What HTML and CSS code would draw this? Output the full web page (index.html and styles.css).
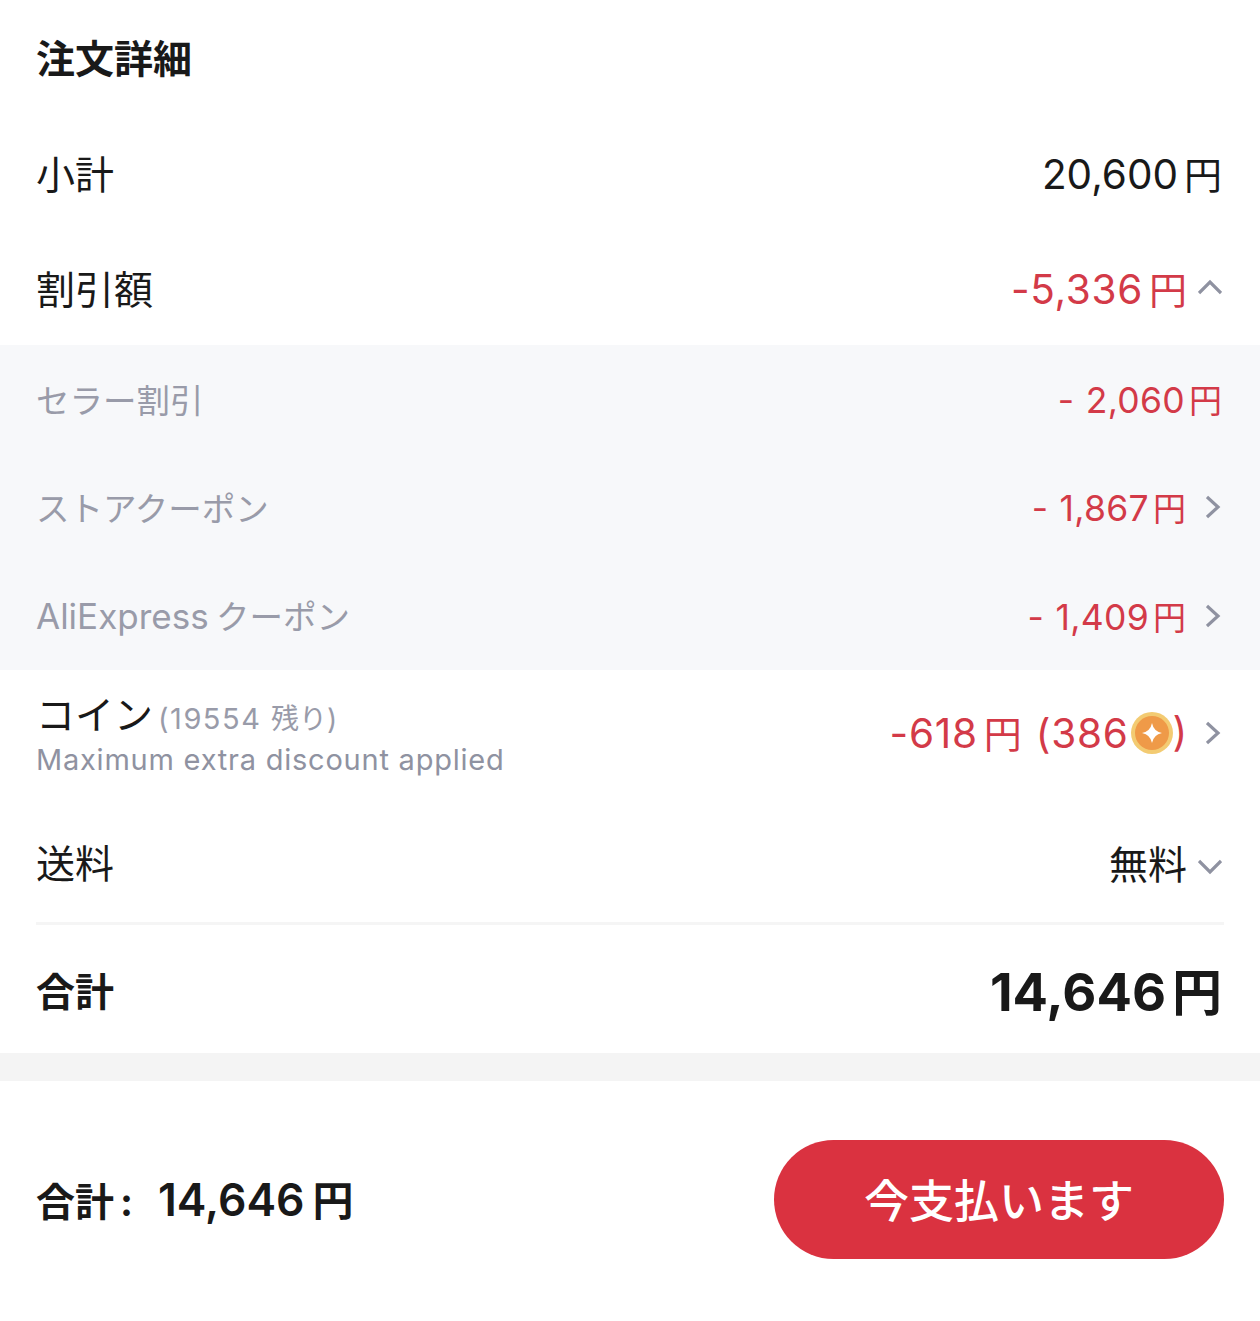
FILE: index.html
```html
<!DOCTYPE html>
<html lang="ja">
<head>
  <meta charset="UTF-8">
  <title>注文詳細</title>
  <link rel="stylesheet" href="styles.css">
</head>
<body>
  <div class="details">
    <h2 class="title">注文詳細</h2>

    <div class="row row-subtotal">
      <span class="label">小計</span>
      <span class="value"><span>20,600<span class="yen">円</span></span></span>
    </div>

    <div class="row row-discount">
      <span class="label">割引額</span>
      <span class="value red"><span>-5,336<span class="yen">円</span></span>
        <svg class="chevron" viewBox="0 0 24 24"><path d="M1 17 12 6l11 11"/></svg>
      </span>
    </div>

    <div class="panel">
      <div class="panel-row">
        <span class="panel-label">セラー割引</span>
        <span class="panel-value"><span>- 2,060<span class="yen">円</span></span></span>
      </div>
      <div class="panel-row">
        <span class="panel-label">ストアクーポン</span>
        <span class="panel-value"><span>- 1,867<span class="yen">円</span></span>
          <svg class="arrow" viewBox="0 0 16 24"><path d="M1 2l11 10L1 22"/></svg>
        </span>
      </div>
      <div class="panel-row">
        <span class="panel-label"><span class="latin">AliExpress</span> クーポン</span>
        <span class="panel-value"><span>- 1,409<span class="yen">円</span></span>
          <svg class="arrow" viewBox="0 0 16 24"><path d="M1 2l11 10L1 22"/></svg>
        </span>
      </div>
    </div>

    <div class="row row-coin">
      <div class="coin-text">
        <div class="coin-title">コイン<span class="coin-left">(19554 <span class="coin-left-unit">残り)</span></span></div>
        <div class="coin-note">Maximum extra discount applied</div>
      </div>
      <span class="value red"><span class="coin-amount">-618<span class="yen">円</span> (386</span><svg class="coin" viewBox="0 0 42 42">
          <circle cx="21" cy="21" r="21" fill="#f3cb72"/>
          <circle cx="21" cy="21" r="17" fill="#ef9a48"/>
          <path d="M21 11q1.600 8.400 10 10q-8.400 1.600-10 10q-1.600-8.400-10-10q8.400-1.600 10-10z" fill="#fff"/>
        </svg><span class="coin-amount">)</span>
        <svg class="arrow arrow-coin" viewBox="0 0 16 24"><path d="M1 2l11 10L1 22"/></svg>
      </span>
    </div>

    <div class="row row-shipping">
      <span class="label">送料</span>
      <span class="value"><span class="free">無料</span>
        <svg class="chevron chevron-down" viewBox="0 0 24 24"><path d="M1 7l11 11L23 7"/></svg>
      </span>
    </div>

    <div class="row row-total">
      <span class="total-label">合計</span>
      <span class="total-value">14,646<span class="yen">円</span></span>
    </div>
  </div>

  <div class="band"></div>

  <div class="footer">
    <div class="footer-total">合計<span class="colon">:</span><span class="footer-amount">14,646<span class="yen">円</span></span></div>
    <button class="pay">今支払います</button>
  </div>
</body>
</html>
```

FILE: styles.css
```css
body {
  margin: 0;
  background-color: #ffffff;
  color: #191919;
  font-family: 'Inter', 'Noto Sans CJK JP', sans-serif;
}
.details {
  height: 1053px;
}
.title {
  margin: 0;
  padding: 0 36px;
  height: 115px;
  line-height: 118px;
  font-size: 39px;
  font-weight: 700;
}
.row {
  display: flex;
  justify-content: space-between;
  align-items: center;
  padding: 0 36px;
}
.row-subtotal {
  height: 115px;
}
.row-discount {
  height: 115px;
}
.label {
  font-size: 39px;
  font-weight: 400;
  padding-bottom: 2px;
}
.value {
  display: flex;
  align-items: center;
  font-size: 40.500px;
  padding-right: 2px;
  white-space: nowrap;
}
.red {
  color: #d33a48;
  letter-spacing: 0.700px;
}
.yen {
  margin-left: 6px;
  font-size: 38px;
  letter-spacing: 0;
}
.free {
  font-size: 39px;
}
.chevron {
  width: 24px;
  height: 24px;
  margin-left: 11px;
  fill: none;
  stroke: #8f92a1;
  stroke-width: 3.2;
}
.chevron-down {
  margin-top: 7px;
}
.arrow {
  width: 16px;
  height: 24px;
  margin-left: 20px;
  fill: none;
  stroke: #8f92a1;
  stroke-width: 3.2;
}
.arrow-coin {
  margin-left: 18px;
}
.panel {
  background-color: #f7f8fa;
  height: 325px;
  display: grid;
  grid-template-rows: repeat(3, 1fr);
}
.panel-row {
  display: flex;
  justify-content: space-between;
  align-items: center;
  padding: 0 36px;
}
.panel-label {
  font-size: 33.500px;
  color: #999ba9;
  padding-bottom: 2px;
  word-spacing: -2px;
}
.latin {
  font-size: 35px;
}
.panel-value {
  display: flex;
  align-items: center;
  font-size: 35.500px;
  color: #d33a48;
  letter-spacing: 0.300px;
  word-spacing: 1px;
  padding-right: 2px;
  white-space: nowrap;
}
.panel-value .yen {
  font-size: 33px;
  margin-left: 4px;
}
.row-coin {
  height: 132px;
  padding-bottom: 7px;
  box-sizing: border-box;
}
.coin-title {
  font-size: 39px;
  line-height: 50px;
}
.coin-left {
  font-size: 29px;
  letter-spacing: 1.500px;
  margin-left: 5px;
  color: #999ba9;
}
.coin-left-unit {
  font-size: 28px;
  letter-spacing: 0;
}
.coin-note {
  font-size: 29px;
  line-height: 32px;
  color: #8f92a1;
  letter-spacing: 0.770px;
}
.coin-amount {
  padding-bottom: 2px;
  word-spacing: 2px;
}
.coin {
  width: 42px;
  height: 42px;
  margin-left: 2px;
}
.row-shipping {
  height: 120px;
}
.row-total {
  margin: 0 36px;
  padding: 0;
  height: 127px;
  border-top: 3px solid #f5f5f5;
}
.total-label {
  font-size: 39px;
  font-weight: 700;
}
.total-value {
  font-size: 52.500px;
  font-weight: 700;
  padding-right: 2px;
}
.total-value .yen {
  font-size: 50px;
}
.band {
  height: 28px;
  background-color: #f4f4f4;
}
.footer {
  display: flex;
  justify-content: space-between;
  align-items: center;
  padding: 59px 36px 62px;
}
.footer-total {
  font-size: 39px;
  font-weight: 700;
  padding-bottom: 4px;
  white-space: nowrap;
}
.colon {
  margin-left: 6px;
}
.footer-amount {
  font-size: 44.500px;
  font-weight: 600;
  margin-left: 25px;
}
.footer-amount .yen {
  font-size: 41px;
  margin-left: 8px;
}
.pay {
  width: 450px;
  height: 119px;
  padding-bottom: 4px;
  border: none;
  border-radius: 60px;
  background-color: #da3240;
  color: #ffffff;
  font-family: inherit;
  font-size: 45px;
  font-weight: 500;
}
```
